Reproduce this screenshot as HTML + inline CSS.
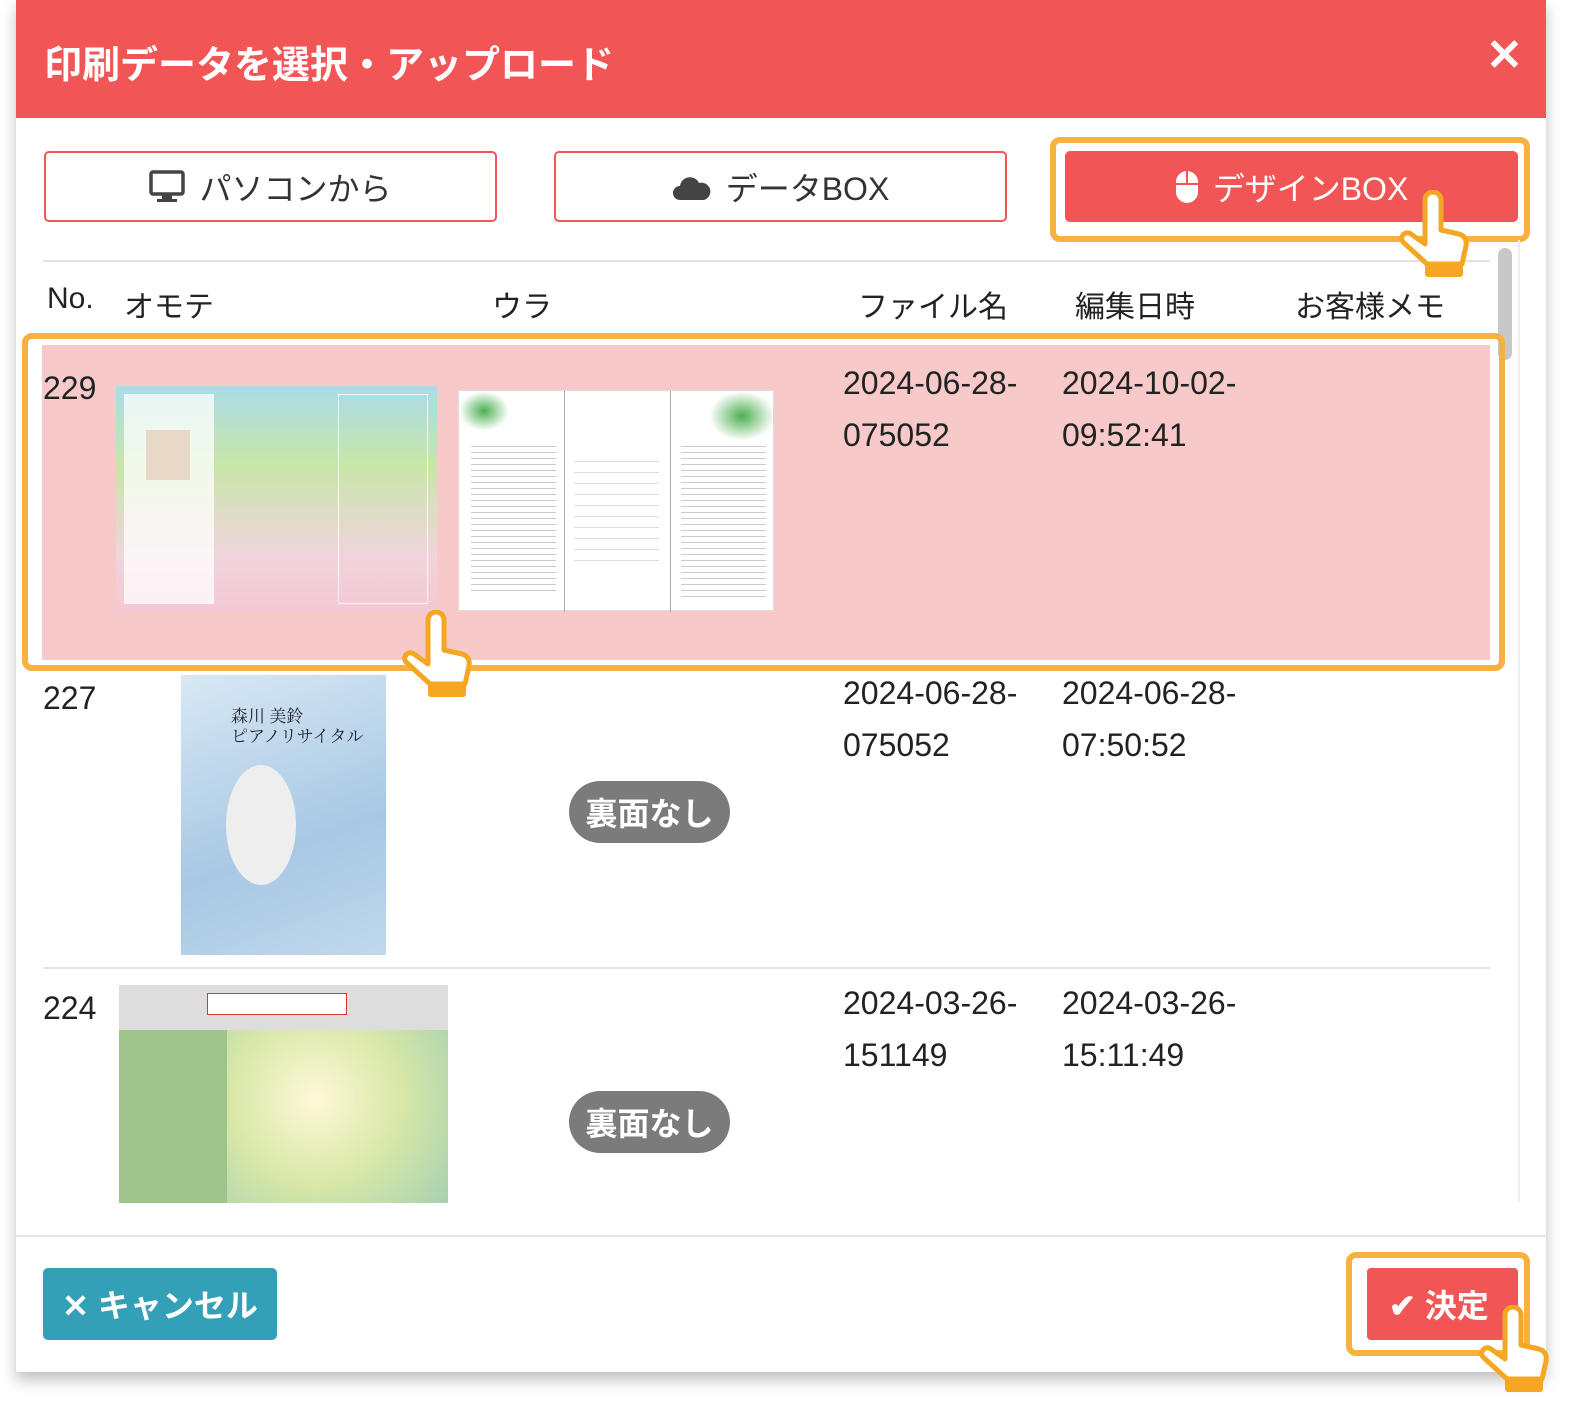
<!DOCTYPE html>
<html><head><meta charset="utf-8"><style>
*{margin:0;padding:0;box-sizing:border-box}
body{width:1580px;height:1416px;background:#fff;position:relative;overflow:hidden;font-family:"Liberation Sans","Noto Sans CJK JP",sans-serif;color:#222}
.a{position:absolute}
.modal{left:16px;top:0;width:1530px;height:1372px;background:#fff;box-shadow:0 8px 14px rgba(0,0,0,.25)}
.hdr{left:16px;top:0;width:1530px;height:118px;background:#f25555;color:#fff;font-size:38px;font-weight:bold;padding:34px 0 0 28px}
.btn{height:71px;border:2px solid #f25555;border-radius:5px;display:flex;align-items:center;justify-content:center;font-size:32px;color:#333;gap:14px}
.ob{border:6px solid #f8b040;border-radius:10px}
.th{font-size:30px;top:282px}
.num{font-size:32px}
.dt{font-size:32px;line-height:52px}
.pill{width:161px;height:62px;border-radius:31px;background:#7b7b7b;color:#fff;font-size:32px;font-weight:bold;display:flex;align-items:center;justify-content:center}
</style></head><body>
<div class="a modal"></div>
<div class="a hdr">印刷データを選択・アップロード</div>
<div class="a" style="left:1486px;top:30px;color:#fff;font-size:44px;font-weight:bold">✕</div>

<div class="a btn" style="left:44px;top:151px;width:453px"><svg width="36" height="34" viewBox="0 0 36 34"><rect x="2" y="2" width="32" height="22" rx="2" fill="none" stroke="#444" stroke-width="3.5"/><rect x="13" y="24" width="10" height="5" fill="#444"/><rect x="8" y="29" width="20" height="3" fill="#444"/></svg>パソコンから</div>
<div class="a btn" style="left:554px;top:151px;width:453px"><svg width="40" height="28" viewBox="0 0 40 28"><path d="M8 27a7 7 0 0 1 0-14 10 10 0 0 1 19-3 8 8 0 0 1 5 17z" fill="#444"/></svg>データBOX</div>
<div class="a ob" style="left:1050px;top:137px;width:480px;height:105px"></div>
<div class="a btn" style="left:1065px;top:151px;width:453px;background:#f25555;color:#fff"><svg width="24" height="34" viewBox="0 0 24 34"><rect x="1" y="1" width="22" height="32" rx="11" fill="#fff"/><line x1="12" y1="1" x2="12" y2="14" stroke="#f25555" stroke-width="2"/><line x1="1" y1="14" x2="23" y2="14" stroke="#f25555" stroke-width="2"/></svg>デザインBOX</div>

<div class="a" style="left:43px;top:260px;width:1447px;height:2px;background:#e3e3e3"></div>
<div class="a" style="left:1518px;top:240px;width:2px;height:962px;background:#eee"></div>
<div class="a" style="left:1498px;top:248px;width:14px;height:112px;border-radius:7px;background:#c8c8c8"></div>

<div class="a th" style="left:47px">No.</div>
<div class="a th" style="left:124px">オモテ</div>
<div class="a th" style="left:492px">ウラ</div>
<div class="a th" style="left:858px">ファイル名</div>
<div class="a th" style="left:1075px">編集日時</div>
<div class="a th" style="left:1295px">お客様メモ</div>

<!-- row 229 -->
<div class="a" style="left:42px;top:345px;width:1448px;height:315px;background:#f7c9c9"></div>
<div class="a ob" style="left:22px;top:333px;width:1483px;height:338px"></div>
<div class="a num" style="left:43px;top:370px">229</div>
<div class="a" style="left:116px;top:386px;width:321px;height:226px;background:linear-gradient(180deg,#a9dce8 0%,#c8e6a8 35%,#f0d4dc 75%,#f4c8d4 100%)">
 <div class="a" style="left:8px;top:8px;width:90px;height:210px;background:rgba(255,255,255,.75)"></div>
 <div class="a" style="left:30px;top:44px;width:44px;height:50px;background:#e8d8c8"></div>
 <div class="a" style="left:222px;top:8px;width:90px;height:210px;border:1px solid rgba(255,255,255,.8)"></div>
</div>
<div class="a" style="left:458px;top:390px;width:316px;height:221px;background:#fff;border:1px solid #ddd">
 <div class="a" style="left:105px;top:0;width:1px;height:221px;background:#aaa"></div>
 <div class="a" style="left:211px;top:0;width:1px;height:221px;background:#aaa"></div>
 <div class="a" style="left:0;top:0;width:50px;height:40px;background:radial-gradient(#4caf50,transparent 70%)"></div>
 <div class="a" style="left:250px;top:0;width:66px;height:50px;background:radial-gradient(#4caf50,transparent 70%)"></div>
 <div class="a" style="left:12px;top:50px;width:85px;height:150px;background:repeating-linear-gradient(#fff 0 5px,#ccc 5px 6px)"></div>
 <div class="a" style="left:222px;top:50px;width:85px;height:160px;background:repeating-linear-gradient(#fff 0 5px,#ccc 5px 6px)"></div>
 <div class="a" style="left:115px;top:60px;width:85px;height:120px;background:repeating-linear-gradient(#fff 0 10px,#ddd 10px 11px)"></div>
</div>
<div class="a dt" style="left:843px;top:357px">2024-06-28-<br>075052</div>
<div class="a dt" style="left:1062px;top:357px">2024-10-02-<br>09:52:41</div>

<!-- row 227 -->
<div class="a num" style="left:43px;top:680px">227</div>
<div class="a" style="left:181px;top:675px;width:205px;height:280px;background:linear-gradient(160deg,#d8e8f4,#a8c8e4 60%,#c0d8ec)">
 <div class="a" style="left:45px;top:90px;width:70px;height:120px;border-radius:50%;background:#eee"></div>
 <div class="a" style="left:50px;top:30px;font-size:17px;font-family:'Noto Serif CJK SC',serif;color:#223;line-height:20px">森川 美鈴<br>ピアノリサイタル</div>
</div>
<div class="a pill" style="left:569px;top:781px">裏面なし</div>
<div class="a dt" style="left:843px;top:667px">2024-06-28-<br>075052</div>
<div class="a dt" style="left:1062px;top:667px">2024-06-28-<br>07:50:52</div>
<div class="a" style="left:43px;top:967px;width:1447px;height:2px;background:#e3e3e3"></div>

<!-- row 224 -->
<div class="a num" style="left:43px;top:990px">224</div>
<div class="a" style="left:119px;top:985px;width:329px;height:218px;background:#ddd">
 <div class="a" style="left:0;top:45px;width:108px;height:173px;background:#9fc48a"></div>
 <div class="a" style="left:108px;top:45px;width:221px;height:173px;background:radial-gradient(circle at 40% 40%,#fff8d8,#d8e8a8 50%,#a8d0b0)"></div>
 <div class="a" style="left:88px;top:8px;width:140px;height:22px;border:1px solid #d33;background:#fff"></div>
</div>
<div class="a pill" style="left:569px;top:1091px">裏面なし</div>
<div class="a dt" style="left:843px;top:977px">2024-03-26-<br>151149</div>
<div class="a dt" style="left:1062px;top:977px">2024-03-26-<br>15:11:49</div>

<div class="a" style="left:16px;top:1203px;width:1530px;height:33px;background:#fff"></div>
<div class="a" style="left:16px;top:1235px;width:1530px;height:2px;background:#e2e6e8"></div>

<div class="a" style="left:43px;top:1268px;width:234px;height:72px;background:#33a0b8;border-radius:5px;color:#fff;font-size:32px;font-weight:bold;display:flex;align-items:center;justify-content:center">✕ キャンセル</div>
<div class="a ob" style="left:1346px;top:1252px;width:184px;height:104px"></div>
<div class="a" style="left:1367px;top:1268px;width:151px;height:72px;background:#f25555;border-radius:4px;color:#fff;font-size:32px;font-weight:bold;display:flex;align-items:center;padding-left:22px">✔ 決定</div>

<svg class="a" style="left:1395px;top:190px" width="80" height="90" viewBox="0 0 80 90"><path d="M30 10a8 8 0 0 1 16 0v30l18 4c6 2 8 6 7 12l-4 18H32L8 52c-4-5 2-12 8-8l14 10z" fill="#fff" stroke="#f5a623" stroke-width="5" stroke-linejoin="round"/><rect x="30" y="72" width="38" height="15" rx="3" fill="#f5a623"/></svg>
<svg class="a" style="left:398px;top:610px" width="80" height="90" viewBox="0 0 80 90"><path d="M30 10a8 8 0 0 1 16 0v30l18 4c6 2 8 6 7 12l-4 18H32L8 52c-4-5 2-12 8-8l14 10z" fill="#fff" stroke="#f5a623" stroke-width="5" stroke-linejoin="round"/><rect x="30" y="72" width="38" height="15" rx="3" fill="#f5a623"/></svg>
<svg class="a" style="left:1475px;top:1305px" width="80" height="90" viewBox="0 0 80 90"><path d="M30 10a8 8 0 0 1 16 0v30l18 4c6 2 8 6 7 12l-4 18H32L8 52c-4-5 2-12 8-8l14 10z" fill="#fff" stroke="#f5a623" stroke-width="5" stroke-linejoin="round"/><rect x="30" y="72" width="38" height="15" rx="3" fill="#f5a623"/></svg>
</body></html>
